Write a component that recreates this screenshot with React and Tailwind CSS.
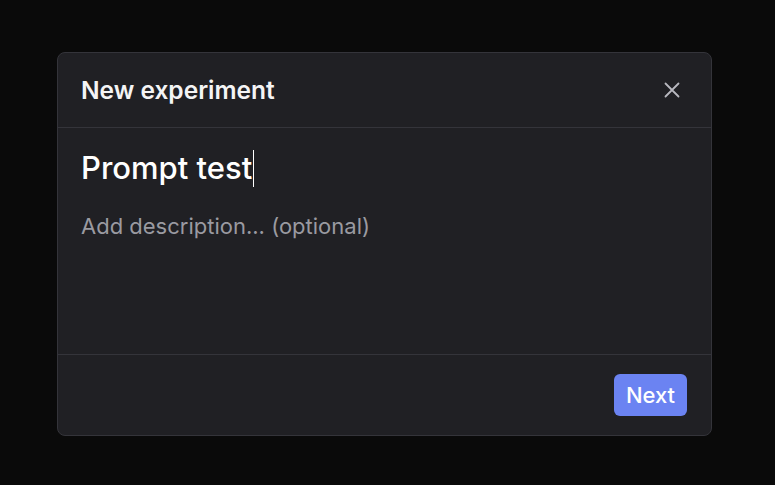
import React, { useState } from 'react'

export default function App() {
    const [title] = useState('Prompt test')
    const [description, setDescription] = useState('')

    return (
        <div className="min-h-screen w-full bg-[#0a0a0a] pt-[52px] pl-[57px]" style={{ fontFamily: 'Inter, "Noto Sans", sans-serif' }}>
            <div className="w-[655px] rounded-lg border border-[#34343a] bg-[#202024] flex flex-col">
                <div className="flex items-center justify-between h-[75px] pl-[23px] pr-[31px] border-b border-[#34343a]">
                    <h2 className="text-[24.5px] font-semibold text-[#f4f4f5]">New experiment</h2>
                    <button className="text-[#b8b8bf]">
                        <svg width="16" height="16" viewBox="0 0 16 16" fill="none" stroke="currentColor" strokeWidth="1.8" strokeLinecap="round">
                            <path d="M1.5 1.5l13 13M14.5 1.5l-13 13" />
                        </svg>
                    </button>
                </div>
                <div className="h-[226px] pl-[23px] pr-6 pt-[18px] flex flex-col">
                    {/* title field, shown with its caret at the end */}
                    <div className="flex items-center h-[44px] text-[31px] font-medium text-white">
                        <span>{title}</span>
                        <span className="inline-block w-px h-[37px] bg-white ml-px" />
                    </div>
                    <textarea
                        value={description}
                        onChange={e => setDescription(e.target.value)}
                        placeholder="Add description... (optional)"
                        className="mt-[22px] bg-transparent outline-none resize-none text-[22px] leading-[28px] text-[#e4e4e7] placeholder:text-[#9a9aa1] h-[120px]"
                    />
                </div>
                <div className="border-t border-[#34343a] flex justify-end pl-6 pr-[24px] pt-[19px] pb-[19px]">
                    <button className="h-[42px] w-[73px] rounded-md bg-[#6b83f2] text-white text-[22px] font-medium">Next</button>
                </div>
            </div>
        </div>
    )
}
